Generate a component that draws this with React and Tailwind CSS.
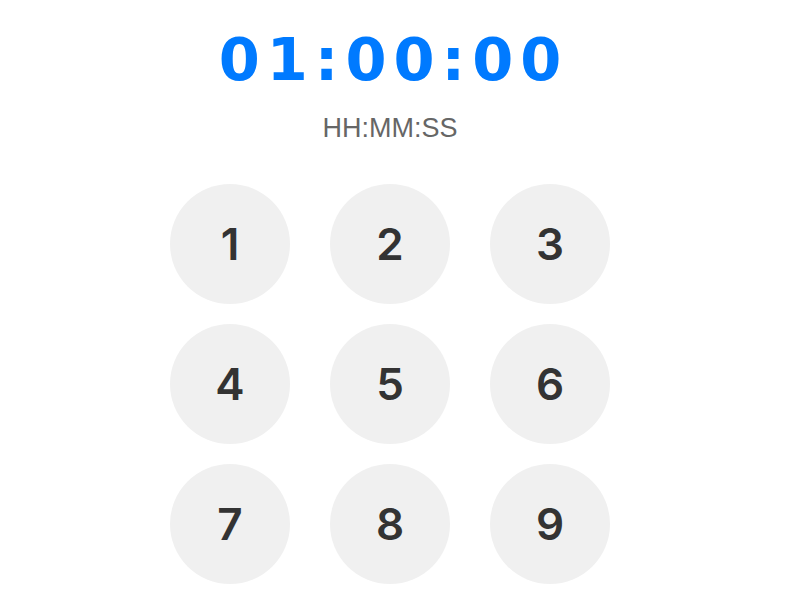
import React, { useState } from 'react';

const keys = ['1', '2', '3', '4', '5', '6', '7', '8', '9', '', '0', '⌫'];

export default function App() {
  const [digits, setDigits] = useState('010000');

  const press = (k) => {
    if (k === '') return;
    if (k === '⌫') {
      setDigits((d) => ('0' + d).slice(0, 6));
      return;
    }
    setDigits((d) => (d + k).slice(-6));
  };

  const shown = `${digits.slice(0, 2)}:${digits.slice(2, 4)}:${digits.slice(4, 6)}`;

  return (
    <div className="h-[599px] w-[780px] overflow-hidden bg-white">
      <div className="flex flex-col items-center pt-[24px]">
        <div
          className="text-[59px] leading-[72px] font-bold tracking-[7px] text-[#007aff] pl-[7px]"
          style={{ fontFamily: '"DejaVu Sans", sans-serif' }}
        >
          {shown}
        </div>
        <div
          className="mt-[16px] text-[27px] leading-[32px] text-[#666666]"
          style={{ fontFamily: '"Liberation Sans", Arial, sans-serif' }}
        >
          HH:MM:SS
        </div>
        <div className="mt-[40px] grid grid-cols-[120px_120px_120px] gap-x-[40px] gap-y-[20px]">
          {keys.map((k, i) => (
            <button
              key={i}
              onClick={() => press(k)}
              className={`h-[120px] w-[120px] rounded-full flex items-center justify-center text-[44px] font-semibold text-[#333333] ${k === '' ? 'bg-transparent' : 'bg-[#f0f0f0]'}`}
              style={{ fontFamily: 'Inter, "Liberation Sans", sans-serif' }}
            >
              {k}
            </button>
          ))}
        </div>
      </div>
    </div>
  );
}
